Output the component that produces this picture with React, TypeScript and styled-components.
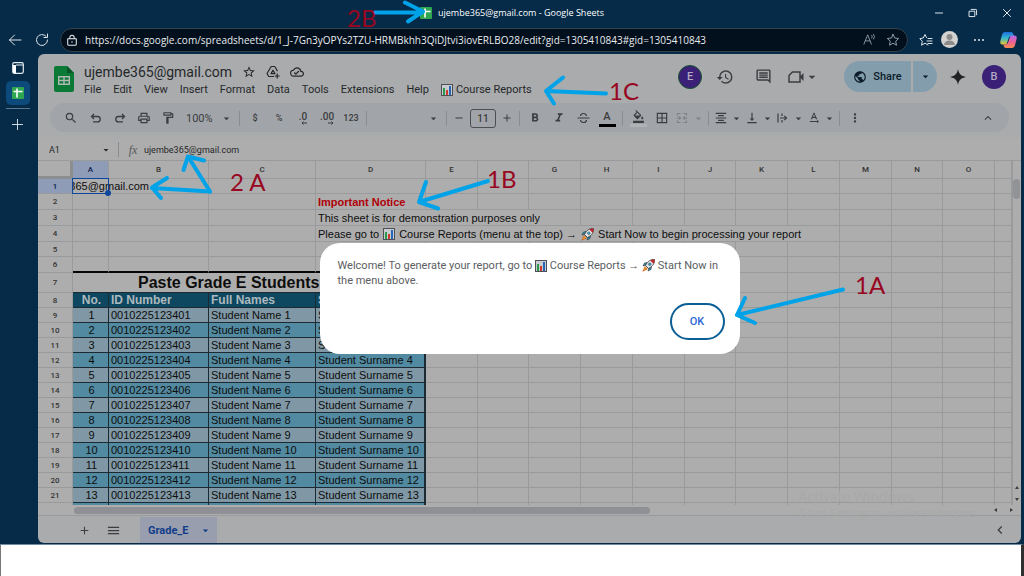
import React from "react";
import styled, { createGlobalStyle, css } from "styled-components";
import {
  MdStarBorder, MdOutlineCloudDone, MdHistory, MdOutlineComment,
  MdPublic, MdSearch, MdOutlinePrint, MdOutlineFormatPaint, MdArrowDropDown,
  MdOutlineFormatColorFill, MdBorderAll, MdFormatAlignCenter, MdVerticalAlignBottom, MdMoreVert,
  MdKeyboardArrowUp, MdAdd, MdRemove, MdMenu, MdKeyboardArrowLeft, MdFormatBold, MdFormatItalic,
  MdTextRotationNone,
} from "react-icons/md";

const ui = `Roboto, "Liberation Sans", sans-serif`;
const segoe = `"Open Sans", "Noto Sans", sans-serif`;
const sheetFont = `"Liberation Sans", Arial, sans-serif`;

const c = {
  navy: "#052b48",
  chrome: "#a9abad",
  tools: "#a1a4a8",
  paper: "#adadad",
  line: "#999a9b",
  ink: "#26282a",
  soft: "#3b3d40",
  arrow: "#00a2e8",
};

const Global = createGlobalStyle`
  *, *::before, *::after { box-sizing: border-box; }
  body { margin: 0; background: #fff; overflow: hidden; }
  button, input, select { font: inherit; color: inherit; background: none; border: 0; padding: 0; margin: 0; outline: 0; appearance: none; min-width: 0; }
  svg { display: block; flex: none; }
`;

const Screen = styled.div`
  position: relative;
  display: flex;
  flex-direction: column;
  height: 100vh;
  font-family: ${ui};
`;
const Browser = styled.div`
  flex: 1;
  min-height: 0;
  display: flex;
  flex-direction: column;
  background: ${c.navy};
  color: #dfe5ea;
`;
const Desktop = styled.footer`
  height: 32px;
  background: #fff;
  border-top: 1px solid #6f8ea6;
  border-left: 1px solid #777;
  border-right: 3px solid #2f2f2d;
`;

const TitleBar = styled.header`
  display: grid;
  grid-template-columns: 1fr auto 1fr;
  align-items: center;
  height: 25px;
`;
const WindowTitle = styled.h1`
  grid-column: 2;
  display: flex;
  align-items: center;
  gap: 6px;
  margin: 0;
  font: 400 9px/14px ${segoe};
  color: #fff;
`;
const WindowButtons = styled.div`
  display: flex;
  justify-content: flex-end;
`;
const IconButton = styled.button<{ $w?: number; $h?: number; $end?: boolean }>`
  display: flex;
  align-items: center;
  justify-content: center;
  flex: none;
  width: ${(p) => p.$w ?? 24}px;
  height: ${(p) => p.$h ?? 24}px;
  margin-left: ${(p) => (p.$end ? "auto" : "0")};
`;
const AddressRow = styled.div`
  display: flex;
  align-items: center;
  height: 29px;
  padding: 0 2px;
`;
const AddressBox = styled.label`
  flex: 1;
  display: flex;
  align-items: center;
  gap: 7px;
  height: 24px;
  padding: 0 2px 0 5px;
  margin: 0 6px 0 5px;
  border: 1px solid #33424f;
  border-radius: 12px;
  background: #020f1c;
  font: 400 10px/16px ${segoe};
  color: #e9ecef;
`;
const AddressInput = styled.input`
  flex: 1;
`;
const AddressActions = styled.div`
  display: flex;
  color: #8f9ba6;
`;
const Profile = styled.button`
  width: 17px;
  height: 17px;
  margin: 0 6px 0 3px;
  border-radius: 50%;
  overflow: hidden;
  background: #d4d3d2;
`;

const Body = styled.div`
  flex: 1;
  min-height: 0;
  display: flex;
  padding: 0 3px 1px 0;
`;
const SideTabs = styled.nav`
  width: 38px;
  flex: none;
  display: flex;
  flex-direction: column;
  align-items: center;
  padding: 2px 3px 0 0;
`;
const ActiveTab = styled.button`
  display: flex;
  align-items: center;
  justify-content: center;
  width: 24px;
  height: 24px;
  margin: 1px 0 3px;
  border-radius: 5px;
  background: #0d4a7c;
`;
const TabRule = styled.div`
  width: 24px;
  height: 1px;
  margin-bottom: 3px;
  background: #5c7891;
`;

const Page = styled.main`
  position: relative;
  flex: 1;
  min-width: 0;
  display: flex;
  flex-direction: column;
  border-radius: 6px;
  overflow: hidden;
  background: ${c.chrome};
  color: ${c.ink};
`;
const DocHeader = styled.div`
  display: flex;
  align-items: flex-start;
  height: 49px;
  padding: 7px 15px 0 16px;
`;
const Logo = styled.div`
  padding: 5px 10px 0 0;
`;
const DocText = styled.div`
  flex: 1;
  min-width: 0;
`;
const NameRow = styled.div`
  display: flex;
  align-items: center;
  gap: 10px;
  height: 21px;
`;
const DocName = styled.h2`
  margin: 0;
  font-size: 14px;
  line-height: 20px;
  font-weight: 400;
`;
const Menu = styled.nav`
  display: flex;
  align-items: center;
  gap: 12px;
  height: 16px;
  font-size: 11px;
  line-height: 16px;
`;
const MenuButton = styled.button`
  display: flex;
  align-items: center;
  gap: 3px;
`;
const HeaderActions = styled.div`
  display: flex;
  align-items: center;
  height: 31px;
  color: ${c.soft};
`;
const Avatar = styled.button<{ $ring?: boolean }>`
  width: 24px;
  height: 24px;
  border-radius: 50%;
  background: #3a2077;
  border: ${(p) => (p.$ring ? "1px solid #16532b" : "0")};
  font-size: 11px;
  font-weight: 500;
  color: #b3acc4;
`;
const ShareGroup = styled.div`
  display: flex;
  gap: 2px;
  height: 31px;
  margin: 0 9px 0 14px;
  border-radius: 16px;
  overflow: hidden;
  color: #0c1c2a;
`;
const ShareButton = styled.button<{ $w: number }>`
  display: flex;
  align-items: center;
  justify-content: center;
  gap: 6px;
  width: ${(p) => p.$w}px;
  background: #839dad;
  font-size: 11px;
  font-weight: 500;
`;
const Gemini = styled(IconButton)`
  margin-right: 12px;
`;

const Toolbar = styled.div`
  display: flex;
  align-items: center;
  height: 29px;
  margin: 0 12px 7px;
  padding: 1px 9px 0 8px;
  border-radius: 15px;
  background: ${c.tools};
  font-size: 9px;
  font-weight: 500;
  color: ${c.soft};
`;
const Divider = styled.div`
  flex: none;
  width: 1px;
  height: 15px;
  margin: 0 3px;
  background: #8a8d90;
`;
const DropTool = styled.button<{ $faint?: boolean }>`
  display: flex;
  align-items: center;
  justify-content: space-between;
  width: 31px;
  padding: 0 0 0 2px;
  color: ${(p) => (p.$faint ? "#808386" : "inherit")};
`;
const PickerBox = styled.div<{ $w: number }>`
  display: flex;
  align-items: center;
  flex: none;
  width: ${(p) => p.$w}px;
  padding: 0 3px 0 6px;
  font-size: 11px;
  font-weight: 400;
`;
const Picker = styled.select`
  flex: 1;
`;
const SizeInput = styled.input`
  width: 26px;
  height: 19px;
  margin: 0 2px;
  border: 1px solid #4d4f52;
  border-radius: 3px;
  font-size: 10px;
  text-align: center;
`;
const Decimal = styled.span`
  display: flex;
  flex-direction: column;
  align-items: flex-end;
  font-size: 10px;
  line-height: 9px;
`;
const Swatch = styled.span<{ $color: string }>`
  display: flex;
  flex-direction: column;
  align-items: center;
  justify-content: center;
  width: 17px;
  height: 17px;
  border-bottom: 3px solid ${(p) => p.$color};
  font-size: 11px;
  line-height: 13px;
`;

const FormulaBar = styled.div`
  display: flex;
  align-items: center;
  height: 21px;
  background: ${c.paper};
  font-size: 9px;
  line-height: 12px;
`;
const NameBox = styled.label`
  display: flex;
  align-items: center;
  width: 77px;
  padding: 0 3px 0 11px;
`;
const NameInput = styled.input`
  flex: 1;
`;
const FormulaInput = styled.input`
  flex: 1;
`;
const Fx = styled.span`
  width: 22px;
  text-align: center;
  font: italic 400 12px/12px "Liberation Serif", serif;
  color: #55585b;
`;

const GridArea = styled.div`
  flex: 1;
  min-height: 0;
  display: flex;
  border-top: 1px solid ${c.line};
  background: ${c.paper};
`;
const GridClip = styled.div`
  flex: 1;
  min-width: 0;
  overflow: hidden;
`;
const Grid = styled.table`
  width: 100%;
  table-layout: fixed;
  border-collapse: separate;
  border-spacing: 0;
  font: 400 11px/13px ${sheetFont};
  color: #0d0d0d;
`;
const Row = styled.tr<{ $h: number }>`
  height: ${(p) => p.$h}px;
`;
const ColHead = styled.th<{ $on?: boolean }>`
  padding: 0;
  border-right: 1px solid ${c.line};
  border-bottom: 1px solid ${c.line};
  font: 500 8px/12px ${ui};
  color: ${(p) => (p.$on ? "#0c1f4d" : "#333")};
  background: ${(p) => (p.$on ? "#8f9cb8" : "transparent")};
`;
const Corner = styled.td`
  padding: 0;
  border-right: 3px solid #8c8d8e;
  border-bottom: 3px solid #8c8d8e;
`;
const RowHead = styled(ColHead)`
  padding-top: 1px;
`;

type Kind = "plain" | "edge" | "banner" | "head" | "odd" | "even";
const fills: Record<Kind, string> = {
  plain: "transparent", edge: "transparent", banner: "transparent",
  head: "#0d4860", odd: "#8098a5", even: "#528aa1",
};
const Cell = styled.td<{ $kind?: Kind; $mid?: boolean; $end?: boolean }>`
  padding: 1px 0 0 2px;
  white-space: nowrap;
  border-right: 1px solid ${c.line};
  border-bottom: 1px solid ${c.line};
  text-align: ${(p) => (p.$mid ? "center" : "left")};
  background: ${(p) => fills[p.$kind ?? "plain"]};
  ${(p) => p.$kind === "edge" && css`border-bottom: 2px solid #060606;`}
  ${(p) => (p.$kind === "odd" || p.$kind === "even" || p.$kind === "head" || p.$kind === "banner") && css`
    border-color: #1b2a33;
    border-right-width: ${p.$end ? 2 : 1}px;
  `}
  ${(p) => p.$kind === "banner" && css`
    padding-left: 65px;
    font-size: 16px;
    line-height: 18px;
    font-weight: 700;
  `}
  ${(p) => p.$kind === "head" && css`
    font-size: 12px;
    font-weight: 700;
    color: #aeb9be;
  `}
`;
const Notice = styled.strong`
  color: #b00009;
`;
const Inline = styled.span`
  display: flex;
  align-items: center;
  gap: 4px;
`;
const SelectedCell = styled(Cell)`
  position: relative;
  padding: 1px 0 0;
`;
const Overflowing = styled.span`
  display: flex;
  justify-content: flex-end;
  width: 76px;
  overflow: hidden;
`;
const Selection = styled.span`
  position: absolute;
  top: -1px;
  left: -1px;
  width: 37px;
  height: 16px;
  border: 1px solid #0c479c;
  &::after {
    content: "";
    position: absolute;
    right: -3px;
    bottom: -3px;
    width: 6px;
    height: 6px;
    border-radius: 50%;
    background: #0c479c;
  }
`;
const VScroll = styled.div`
  display: flex;
  flex-direction: column;
  width: 9px;
  padding-top: 18px;
  border-left: 1px solid ${c.line};
`;
const VThumb = styled.div`
  width: 7px;
  height: 20px;
  margin-bottom: auto;
  border-radius: 4px;
  background: #929397;
`;
const HScroll = styled.div`
  display: flex;
  align-items: center;
  height: 11px;
  padding-left: 36px;
  border-bottom: 1px solid ${c.line};
  background: ${c.paper};
`;
const HTrack = styled.div`
  flex: 1;
`;
const HThumb = styled.div`
  width: 63%;
  height: 7px;
  border-radius: 4px;
  background: #8f9095;
`;
const SheetTabs = styled.div`
  display: flex;
  align-items: center;
  height: 27px;
  padding: 1px 10px 0 34px;
  color: ${c.soft};
`;
const SheetTab = styled.button`
  display: flex;
  align-items: center;
  justify-content: space-between;
  width: 77px;
  height: 26px;
  margin: 0 auto 0 10px;
  padding: 0 5px 0 8px;
  background: #999eae;
  font-size: 11px;
  font-weight: 700;
  color: #103d8a;
`;

const Overlay = styled.div`
  position: absolute;
  inset: 0;
  display: flex;
  align-items: center;
  justify-content: center;
`;
const Dialog = styled.section`
  display: flex;
  flex-direction: column;
  justify-content: space-between;
  width: 420px;
  min-height: 111px;
  padding: 15px 15px 14px 18px;
  border-radius: 20px;
  background: #fff;
  font-size: 11px;
  line-height: 15px;
  color: #5b5e62;
`;
const DialogText = styled.p`
  margin: 0;
  svg { display: inline-block; vertical-align: -3px; }
`;
const OkButton = styled.button`
  align-self: flex-end;
  width: 55px;
  height: 37px;
  border: 2px solid #0b5f96;
  border-radius: 19px;
  font-weight: 500;
  color: #2c66d6;
`;
const Watermark = styled.div`
  position: absolute;
  right: 42px;
  bottom: 23px;
  font: 400 11px/15px ${segoe};
  color: #a8a8a8;
  strong { display: block; font-size: 14px; line-height: 17px; font-weight: 400; }
`;
const Arrows = styled.svg`
  position: absolute;
  top: 0;
  left: 0;
  fill: none;
  stroke: ${c.arrow};
  stroke-width: 4px;
  stroke-linecap: round;
  stroke-linejoin: round;
  pointer-events: none;
`;
const Mark = styled.span<{ $x: number; $y: number }>`
  position: absolute;
  left: ${(p) => p.$x}px;
  top: ${(p) => p.$y}px;
  font: 400 24px/24px Lato, sans-serif;
  color: #98061f;
`;

const Caret = ({ size = 13 }: { size?: number }) => <MdArrowDropDown size={size} />;

const ChartEmoji = () => (
  <svg width="12" height="12" viewBox="0 0 12 12" role="img" aria-label="chart">
    <rect x=".5" y=".5" width="11" height="11" fill="#c8cbd0" stroke="#4d5157" />
    <rect x="2" y="4" width="2" height="7" fill="#2d9a4b" />
    <rect x="5" y="6" width="2" height="5" fill="#cf3a2e" />
    <rect x="8" y="2" width="2" height="9" fill="#2767b8" />
  </svg>
);
const RocketEmoji = () => (
  <svg width="13" height="13" viewBox="0 0 13 13" role="img" aria-label="rocket">
    <path d="M4 6 1 7l1.500-3L5.500 3.500zM7 9l-1 3 3-1.500.500-3z" fill="#2b93b8" stroke="#333" strokeWidth=".6" />
    <path d="M3 7.500.8 12.300 5.500 10z" fill="#f29a1f" stroke="#b5471a" strokeWidth=".5" />
    <path d="M12.500.5C9 .4 6 1.500 3.500 6.500l3 3C11.500 7 12.600 4 12.500.5z" fill="#dfe6ea" stroke="#333" strokeWidth=".8" />
    <path d="M12.500.5c-1.500 0-3 .2-4.300.9l3.400 3.400c.7-1.300.9-2.800.9-4.300z" fill="#c22127" />
    <circle cx="7.800" cy="5.200" r="1.300" fill="#3fb3de" stroke="#333" strokeWidth=".5" />
  </svg>
);
const SheetsTile = () => (
  <svg width="12" height="12" viewBox="0 0 12 12" aria-hidden="true">
    <rect width="12" height="12" rx="1" fill="#2fa64f" />
    <path d="M1.500 4.500h9M5 1.500v9" stroke="#fff" strokeWidth="1.600" />
  </svg>
);
const SheetsLogo = () => (
  <svg width="20" height="26" viewBox="0 0 20 26" aria-hidden="true">
    <path d="M2 0h11l7 7v17a2 2 0 0 1-2 2H2a2 2 0 0 1-2-2V2a2 2 0 0 1 2-2z" fill="#0b7a37" />
    <path d="M13 0l7 7h-7z" fill="#075625" />
    <path d="M4.700 10.700h10.600v7.600H4.700zM4.700 14.500h10.600M10 10.700v7.600" fill="none" stroke="#b0b8b2" strokeWidth="1.400" />
  </svg>
);
const DriveAdd = () => (
  <svg width="14" height="14" viewBox="0 0 14 14" fill="none" stroke="currentColor" strokeWidth="1.200" strokeLinejoin="round" aria-hidden="true">
    <path d="M8 11.500H2.800L1 8.500 5.200 1.500h3.600l2.700 4.800" />
    <path d="M5 8.600 7 5.200l2 3.400z" />
    <path d="M11.200 8.500v5M8.700 11h5" />
  </svg>
);
const Curve = ({ flip }: { flip?: boolean }) => (
  <svg width="12" height="12" viewBox="0 0 12 12" fill="none" stroke="currentColor" strokeWidth="1.300" aria-hidden="true">
    {flip
      ? <path d="M8 2 10.500 4.500 8 7M10.500 4.500H4.500a2.700 2.700 0 0 0 0 5.400H9" />
      : <path d="M4 2 1.500 4.500 4 7M1.500 4.500h6a2.700 2.700 0 0 1 0 5.400H3" />}
  </svg>
);
const StrikeIcon = () => (
  <svg width="13" height="12" viewBox="0 0 13 12" fill="none" stroke="currentColor" strokeWidth="1.200" aria-hidden="true">
    <path d="M.5 6h12M9.500 4C9.300 2.500 8.200 1.500 6.500 1.500S3.500 2.400 3.500 4M3.500 8c.2 1.500 1.300 2.500 3 2.500s3-.9 3-2.500" />
  </svg>
);
const MergeIcon = () => (
  <svg width="12" height="12" viewBox="0 0 12 12" fill="none" stroke="currentColor" strokeWidth="1.200" aria-hidden="true">
    <path d="M4.500 1.500h-3v2M7.500 1.500h3v2M4.500 10.500h-3v-2M7.500 10.500h3v-2M.5 6h4M3 4.500 4.500 6 3 7.500M11.500 6h-4M9 4.500 7.500 6 9 7.500" />
  </svg>
);
const WrapIcon = () => (
  <svg width="12" height="12" viewBox="0 0 12 12" fill="none" stroke="currentColor" strokeWidth="1.200" aria-hidden="true">
    <path d="M2 1.500v9M6 1.500v2.500M6 8v2.500M4 6h6.500M8.300 3.800 10.500 6 8.300 8.200" />
  </svg>
);
const SmallArrow = ({ right }: { right?: boolean }) => (
  <svg width="6" height="4" viewBox="0 0 6 4" fill="none" stroke="currentColor" aria-hidden="true">
    {right ? <path d="M0 2h5M3.500.5 5 2 3.500 3.500" /> : <path d="M6 2H1M2.500.5 1 2l1.500 1.500" />}
  </svg>
);
const Copilot = () => (
  <svg width="17" height="16" viewBox="0 0 17 16" aria-hidden="true">
    <defs>
      <linearGradient id="cpA" x1="0" y1="0" x2="0" y2="1">
        <stop offset="0" stopColor="#1d6fe0" /><stop offset=".5" stopColor="#35b9c9" /><stop offset="1" stopColor="#f0c52c" />
      </linearGradient>
      <linearGradient id="cpB" x1="0" y1="0" x2="0" y2="1">
        <stop offset="0" stopColor="#b06cf0" /><stop offset=".5" stopColor="#ee5f9b" /><stop offset="1" stopColor="#f58a4a" />
      </linearGradient>
    </defs>
    <path d="M5 0h6c1.500 0 2 1 2.400 2.500L14 4h-2.500C9.500 4 9 5 8.500 6.500L7 11c-.5 1-1 1.500-2.500 1.500H3c-2.500 0-3.200-1.500-2.500-4l1.600-6C2.600 1 3.500 0 5 0z" fill="url(#cpA)" />
    <path d="M12 16H6c-1.500 0-2-1-2.400-2.500L3.300 12.500h2c1.700 0 2.500-1 3-2.500L10 5c.5-1 1-1.500 2.500-1.500H14c2.500 0 3.200 1.500 2.500 4l-1.600 6C14.400 15 13.500 16 12 16z" fill="url(#cpB)" />
  </svg>
);
const Stroke = ({ d, size = 14, width = 1 }: { d: string; size?: number; width?: number }) => (
  <svg width={size} height={size} viewBox="0 0 14 14" fill="none" stroke="currentColor" strokeWidth={width} strokeLinecap="round" strokeLinejoin="round" aria-hidden="true">
    <path d={d} />
  </svg>
);

const star = "M7 1.300 8.700 5l4 .5-3 2.700.8 4L7 10.200l-3.500 2 .8-4-3-2.700 4-.5z";
const menus = ["File", "Edit", "View", "Insert", "Format", "Data", "Tools", "Extensions", "Help"];
const columns: [string, number][] = [
  ["A", 36], ["B", 100], ["C", 107], ["D", 110], ["E", 52], ["", 51], ["G", 52], ["H", 52], ["I", 52],
  ["J", 51], ["K", 52], ["L", 52], ["M", 52], ["N", 51], ["O", 52],
];
const students = Array.from({ length: 13 }, (_, i) => i + 1);
const blanks = (n: number) => Array.from({ length: n }, (_, i) => <Cell key={`b${i}`} />);

function Sheet() {
  return (
    <Grid>
      <colgroup>
        <col style={{ width: 35 }} />
        {columns.map(([, w], i) => <col key={i} style={{ width: w }} />)}
        <col />
      </colgroup>
      <thead>
        <Row $h={18}>
          <Corner />
          {columns.map(([name], i) => <ColHead key={i} scope="col" $on={i === 0}>{name}</ColHead>)}
          <ColHead />
        </Row>
      </thead>
      <tbody>
        <Row $h={15}>
          <RowHead scope="row" $on>1</RowHead>
          <SelectedCell colSpan={2}><Overflowing>ujembe365@gmail.com</Overflowing><Selection /></SelectedCell>
          {blanks(14)}
        </Row>
        <Row $h={16}>
          <RowHead scope="row">2</RowHead>{blanks(3)}
          <Cell><Notice>Important Notice</Notice></Cell>{blanks(12)}
        </Row>
        <Row $h={16}>
          <RowHead scope="row">3</RowHead>{blanks(3)}
          <Cell colSpan={4}>This sheet is for demonstration purposes only</Cell>{blanks(9)}
        </Row>
        <Row $h={16}>
          <RowHead scope="row">4</RowHead>{blanks(3)}
          <Cell colSpan={9}>
            <Inline>Please go to <ChartEmoji /> Course Reports (menu at the top) → <RocketEmoji /> Start Now to begin processing your report</Inline>
          </Cell>{blanks(4)}
        </Row>
        <Row $h={15}><RowHead scope="row">5</RowHead>{blanks(16)}</Row>
        <Row $h={16}>
          <RowHead scope="row">6</RowHead>
          <Cell $kind="edge" /><Cell $kind="edge" /><Cell $kind="edge" /><Cell $kind="edge" />{blanks(12)}
        </Row>
        <Row $h={20}>
          <RowHead scope="row">7</RowHead>
          <Cell $kind="banner" $end colSpan={4}>Paste Grade E Students</Cell>{blanks(12)}
        </Row>
        <Row $h={15}>
          <RowHead scope="row">8</RowHead>
          <Cell $kind="head" $mid>No.</Cell><Cell $kind="head">ID Number</Cell>
          <Cell $kind="head">Full Names</Cell><Cell $kind="head" $end>S</Cell>{blanks(12)}
        </Row>
        {students.map((n) => {
          const kind: Kind = n % 2 ? "odd" : "even";
          return (
            <Row key={n} $h={15}>
              <RowHead scope="row">{n + 8}</RowHead>
              <Cell $kind={kind} $mid>{n}</Cell>
              <Cell $kind={kind}>{`00102251234${String(n).padStart(2, "0")}`}</Cell>
              <Cell $kind={kind}>Student Name {n}</Cell>
              <Cell $kind={kind} $end>Student Surname {n}</Cell>
              {blanks(12)}
            </Row>
          );
        })}
        <Row $h={15}>
          <RowHead />
          <Cell $kind="even" /><Cell $kind="even" /><Cell $kind="even" /><Cell $kind="even" $end />{blanks(12)}
        </Row>
      </tbody>
    </Grid>
  );
}

export default function App() {
  return (
    <Screen>
      <Global />
      <Browser>
        <TitleBar>
          <WindowTitle><SheetsTile />ujembe365@gmail.com - Google Sheets</WindowTitle>
          <WindowButtons>
            <IconButton $w={34} aria-label="Minimize"><Stroke size={10} d="M2 7h10" width={1.4} /></IconButton>
            <IconButton $w={34} aria-label="Restore"><Stroke size={10} d="M2 4.500h7.500V12H2zM4.500 2H11a1 1 0 0 1 1 1v6.500" width={1.4} /></IconButton>
            <IconButton $w={34} aria-label="Close window"><Stroke size={10} d="M2 2l10 10M12 2 2 12" width={1.4} /></IconButton>
          </WindowButtons>
        </TitleBar>
        <AddressRow>
          <IconButton $w={26} aria-label="Back"><Stroke d="M13 7H1.500M6.500 2l-5 5 5 5" /></IconButton>
          <IconButton $w={27} aria-label="Reload"><Stroke d="M12.500 7A5.500 5.500 0 1 1 11 3.200M12.500 1v3.500H9" /></IconButton>
          <AddressBox>
            <Stroke size={12} d="M2 5.500h10v6.500a1 1 0 0 1-1 1H3a1 1 0 0 1-1-1zM4.500 5.500V4a2.500 2.500 0 0 1 5 0v1.500M7 8.700v1" width={1.2} />
            <AddressInput aria-label="Address" defaultValue="https://docs.google.com/spreadsheets/d/1_J-7Gn3yOPYs2TZU-HRMBkhh3QiDJtvi3iovERLBO28/edit?gid=1305410843#gid=1305410843" />
            <AddressActions>
              <IconButton $h={20} aria-label="Read aloud"><Stroke size={13} d="M1 12 5 2l4 10M2.500 8.500h5M9.500 2.500q1 1.500 0 3M11.500 1.500q2 2.500 0 5" /></IconButton>
              <IconButton $h={20} aria-label="Add to favourites"><Stroke d={star} /></IconButton>
            </AddressActions>
          </AddressBox>
          <IconButton aria-label="Favourites"><Stroke d="M9 12 6 10.200l-3.500 2 .8-4-2.500-2.500 3.400-.7L6 1.500 7.500 4.500M9 5.500h4M8 8h5M9 10.500h4" /></IconButton>
          <Profile aria-label="Profile">
            <svg width="17" height="17" viewBox="0 0 17 17" fill="#8d8b89"><circle cx="8.500" cy="6" r="3" /><path d="M3 14a5.500 4.500 0 0 1 11 0z" /></svg>
          </Profile>
          <IconButton $w={30} aria-label="More"><svg width="12" height="4" viewBox="0 0 12 4" fill="currentColor"><circle cx="2" cy="2" r="1" /><circle cx="6" cy="2" r="1" /><circle cx="10" cy="2" r="1" /></svg></IconButton>
          <IconButton $w={28} aria-label="Copilot"><Copilot /></IconButton>
        </AddressRow>
        <Body>
          <SideTabs>
            <IconButton aria-label="Tab actions">
              <svg width="12" height="12" viewBox="0 0 12 12"><rect x=".7" y=".7" width="10.600" height="10.600" rx="1.500" fill="none" stroke="#e6ebef" strokeWidth="1.200" /><path d="M1 3h3v8H1z" fill="#fff" /><path d="M4 3h7" stroke="#e6ebef" /></svg>
            </IconButton>
            <ActiveTab aria-label="Google Sheets tab"><SheetsTile /></ActiveTab>
            <TabRule />
            <IconButton aria-label="New tab"><Stroke size={13} d="M7 1.500v11M1.500 7h11" /></IconButton>
          </SideTabs>
          <Page>
            <DocHeader>
              <Logo><SheetsLogo /></Logo>
              <DocText>
                <NameRow>
                  <DocName>ujembe365@gmail.com</DocName>
                  <MdStarBorder size={14} /><DriveAdd /><MdOutlineCloudDone size={14} />
                </NameRow>
                <Menu>
                  {menus.map((m) => <MenuButton key={m}>{m}</MenuButton>)}
                  <MenuButton><ChartEmoji />Course Reports</MenuButton>
                </Menu>
              </DocText>
              <HeaderActions>
                <Avatar $ring aria-label="Collaborator E">E</Avatar>
                <IconButton $w={46} aria-label="Version history"><MdHistory size={18} /></IconButton>
                <IconButton $w={30} aria-label="Comments"><MdOutlineComment size={17} /></IconButton>
                <IconButton $w={52} aria-label="Meet">
                  <svg width="16" height="14" viewBox="0 0 16 14" fill="none" stroke="currentColor" strokeWidth="1.500"><path d="M4.500 2H12v10H1V5.500z" /><path d="M12 6.500 15.500 3v8L12 7.500z" fill="currentColor" stroke="none" /></svg>
                  <Caret size={16} />
                </IconButton>
                <ShareGroup>
                  <ShareButton $w={67}><MdPublic size={14} />Share</ShareButton>
                  <ShareButton $w={24} aria-label="Share options"><Caret /></ShareButton>
                </ShareGroup>
                <Gemini aria-label="Gemini"><svg width="16" height="16" viewBox="0 0 16 16" fill="#202224"><path d="M8 0c.8 4.800 3.200 7.200 8 8-4.800.8-7.200 3.200-8 8-.8-4.800-3.200-7.200-8-8 4.800-.8 7.200-3.200 8-8z" /></svg></Gemini>
                <Avatar aria-label="Account B">B</Avatar>
              </HeaderActions>
            </DocHeader>
            <Toolbar role="toolbar">
              <IconButton $w={26} aria-label="Search"><MdSearch size={14} /></IconButton>
              <IconButton aria-label="Undo"><Curve /></IconButton>
              <IconButton aria-label="Redo"><Curve flip /></IconButton>
              <IconButton aria-label="Print"><MdOutlinePrint size={14} /></IconButton>
              <IconButton aria-label="Paint format"><MdOutlineFormatPaint size={14} /></IconButton>
              <PickerBox $w={56}><Picker aria-label="Zoom"><option>100%</option></Picker><Caret /></PickerBox>
              <Divider />
              <IconButton aria-label="Currency">$</IconButton>
              <IconButton aria-label="Percent">%</IconButton>
              <IconButton aria-label="Fewer decimals"><Decimal>.0<SmallArrow /></Decimal></IconButton>
              <IconButton aria-label="More decimals"><Decimal>.00<SmallArrow right /></Decimal></IconButton>
              <IconButton aria-label="Number formats">123</IconButton>
              <Divider />
              <PickerBox $w={73}><Picker aria-label="Font"><option></option></Picker><Caret /></PickerBox>
              <Divider />
              <IconButton $w={18} aria-label="Smaller"><MdRemove size={12} /></IconButton>
              <SizeInput aria-label="Font size" defaultValue="11" />
              <IconButton $w={18} aria-label="Larger"><MdAdd size={12} /></IconButton>
              <Divider />
              <IconButton aria-label="Bold"><MdFormatBold size={14} /></IconButton>
              <IconButton aria-label="Italic"><MdFormatItalic size={14} /></IconButton>
              <IconButton aria-label="Strikethrough"><StrikeIcon /></IconButton>
              <IconButton aria-label="Text colour"><Swatch $color="#000">A</Swatch></IconButton>
              <Divider />
              <IconButton aria-label="Fill colour"><Swatch $color="#b1b2b3"><MdOutlineFormatColorFill size={13} /></Swatch></IconButton>
              <IconButton aria-label="Borders"><MdBorderAll size={14} /></IconButton>
              <DropTool $faint aria-label="Merge"><MergeIcon /><Caret /></DropTool>
              <Divider />
              <DropTool aria-label="Horizontal align"><MdFormatAlignCenter size={14} /><Caret /></DropTool>
              <DropTool aria-label="Vertical align"><MdVerticalAlignBottom size={14} /><Caret /></DropTool>
              <DropTool aria-label="Text wrapping"><WrapIcon /><Caret /></DropTool>
              <DropTool aria-label="Text rotation"><MdTextRotationNone size={14} /><Caret /></DropTool>
              <Divider />
              <IconButton aria-label="More tools"><MdMoreVert size={14} /></IconButton>
              <IconButton $end aria-label="Hide menus"><MdKeyboardArrowUp size={14} /></IconButton>
            </Toolbar>
            <FormulaBar>
              <NameBox><NameInput aria-label="Name box" defaultValue="A1" /><Caret size={12} /></NameBox>
              <Divider />
              <Fx>fx</Fx>
              <FormulaInput aria-label="Formula" defaultValue="ujembe365@gmail.com" />
            </FormulaBar>
            <GridArea>
              <GridClip><Sheet /></GridClip>
              <VScroll>
                <VThumb />
                <IconButton $w={8} $h={12} aria-label="Scroll up"><svg width="4" height="3" viewBox="0 0 4 3" fill={c.soft}><path d="M0 3 2 0l2 3z" /></svg></IconButton>
                <IconButton $w={8} $h={12} aria-label="Scroll down"><svg width="4" height="3" viewBox="0 0 4 3" fill={c.soft}><path d="M0 0h4L2 3z" /></svg></IconButton>
              </VScroll>
            </GridArea>
            <HScroll>
              <HTrack><HThumb /></HTrack>
              <IconButton $w={12} $h={10} aria-label="Scroll left"><svg width="3" height="4" viewBox="0 0 3 4" fill={c.soft}><path d="M3 0v4L0 2z" /></svg></IconButton>
              <IconButton $w={20} $h={10} aria-label="Scroll right"><svg width="3" height="4" viewBox="0 0 3 4" fill={c.soft}><path d="M0 0v4l3-2z" /></svg></IconButton>
            </HScroll>
            <SheetTabs>
              <IconButton aria-label="Add sheet"><MdAdd size={13} /></IconButton>
              <IconButton $w={34} aria-label="All sheets"><MdMenu size={15} /></IconButton>
              <SheetTab>Grade_E<Caret /></SheetTab>
              <IconButton $w={22} aria-label="Show side panel"><MdKeyboardArrowLeft size={16} /></IconButton>
            </SheetTabs>
            <Watermark><strong>Activate Windows</strong>Go to Settings to activate Windows.</Watermark>
            <Overlay>
              <Dialog role="dialog">
                <DialogText>Welcome! To generate your report, go to <ChartEmoji /> Course Reports → <RocketEmoji /> Start Now in the menu above.</DialogText>
                <OkButton>OK</OkButton>
              </Dialog>
            </Overlay>
          </Page>
        </Body>
      </Browser>
      <Desktop />
      <Arrows width="1024" height="576" viewBox="0 0 1024 576" aria-hidden="true">
        <path d="M375 12.500h46M405 2.500l18 9-15 10" />
        <path d="M606 93.500 546 91M563 77.500 546 91l8 12.500" />
        <path d="M488 181 419 202M426 182l-7 20 19 6.500" />
        <path d="M843 289.500 737 315M745 298l-8 17 18 8" />
        <path d="M210 191.500 152 188M167 178l-15 9.500 9 10.500" />
        <path d="M210 191.500 188 156.500M183.500 170l4.500-13.500 16 4" />
      </Arrows>
      <Mark $x={347} $y={6}>2B</Mark>
      <Mark $x={609} $y={79}>1C</Mark>
      <Mark $x={487} $y={167}>1B</Mark>
      <Mark $x={855} $y={273}>1A</Mark>
      <Mark $x={230} $y={170}>2 A</Mark>
    </Screen>
  );
}
